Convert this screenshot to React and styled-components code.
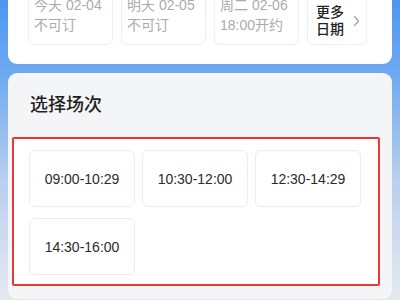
import React from "react"
import styled, { createGlobalStyle } from "styled-components"

const GlobalStyle = createGlobalStyle`
  html, body {
    margin: 0;
    padding: 0;
  }
  body {
    width: 400px;
    height: 300px;
    overflow: hidden;
    background: linear-gradient(180deg, #4f96f2 0%, #6eaaf0 25%, #b9cfee 60%, #e4e9f0 100%);
    font-family: "Liberation Sans", "Noto Sans CJK SC", sans-serif;
  }
`

const dates = [
  { day: "今天 02-04", note: "不可订" },
  { day: "明天 02-05", note: "不可订" },
  { day: "周二 02-06", note: "18:00开约" },
]

const slots = ["09:00-10:29", "10:30-12:00", "12:30-14:29", "14:30-16:00"]

const Chevron = () => (
  <svg width="7" height="12" viewBox="0 0 7 12" fill="none">
    <path d="M1.5 1.5L5.5 6L1.5 10.5" stroke="#a0a0a0" strokeWidth="1.2" strokeLinecap="round" strokeLinejoin="round" />
  </svg>
)

const App = () => {
  return (
    <Page>
      <GlobalStyle />
      <DateCard>
        <DateRow>
          {dates.map((d) => (
            <DateTile key={d.day}>
              <DateLine>{d.day}</DateLine>
              <DateLine>{d.note}</DateLine>
            </DateTile>
          ))}
          <MoreTile>
            <MoreText>
              <span>更多</span>
              <span>日期</span>
            </MoreText>
            <Chevron />
          </MoreTile>
        </DateRow>
      </DateCard>
      <SessionCard>
        <Title>选择场次</Title>
        <SlotPanel>
          {slots.map((s) => (
            <Slot key={s}>{s}</Slot>
          ))}
        </SlotPanel>
      </SessionCard>
    </Page>
  )
}

export default App

const Page = styled.div`
  display: flex;
  flex-direction: column;
  gap: 9px;
  padding: 0 8px;
  margin-top: -26px;
`

const DateCard = styled.div`
  background: #ffffff;
  border-radius: 9px;
  padding: 12px 24px 19px 20px;
`

const DateRow = styled.div`
  display: grid;
  grid-template-columns: 85px 85px 85px 60px;
  gap: 8px;
`

const DateTile = styled.div`
  display: flex;
  flex-direction: column;
  justify-content: flex-end;
  box-sizing: border-box;
  height: 59px;
  padding: 10px 5px 9px;
  border: 1px solid #efefef;
  border-radius: 6px;
`

const DateLine = styled.div`
  font-size: 14px;
  line-height: 20px;
  color: #ababab;
  white-space: nowrap;
`

const MoreTile = styled.div`
  display: flex;
  align-items: center;
  gap: 9px;
  box-sizing: border-box;
  height: 59px;
  padding: 10px 0 0 8px;
  border: 1px solid #efefef;
  border-radius: 6px;
`

const MoreText = styled.div`
  display: flex;
  flex-direction: column;
  font-size: 14px;
  line-height: 17px;
  font-weight: 500;
  color: #222222;
  white-space: nowrap;
`

const SessionCard = styled.div`
  display: flex;
  flex-direction: column;
  gap: 20px;
  padding: 20px 0 13px;
  background: #f4f5f7;
  border-radius: 9px;
`

const Title = styled.div`
  padding-left: 22px;
  font-size: 18px;
  line-height: 24px;
  font-weight: 500;
  color: #1f1f1f;
`

const SlotPanel = styled.div`
  display: grid;
  grid-template-columns: repeat(3, 106px);
  grid-auto-rows: 57px;
  column-gap: 7px;
  row-gap: 11px;
  margin: 0 12px 0 4px;
  padding: 11px 15px 9px;
  background: #ffffff;
  border: 2px solid #e53935;
  border-radius: 2px;
`

const Slot = styled.div`
  display: flex;
  align-items: center;
  justify-content: center;
  border: 1px solid #ececec;
  border-radius: 6px;
  font-size: 14px;
  color: #2b2b2b;
`
